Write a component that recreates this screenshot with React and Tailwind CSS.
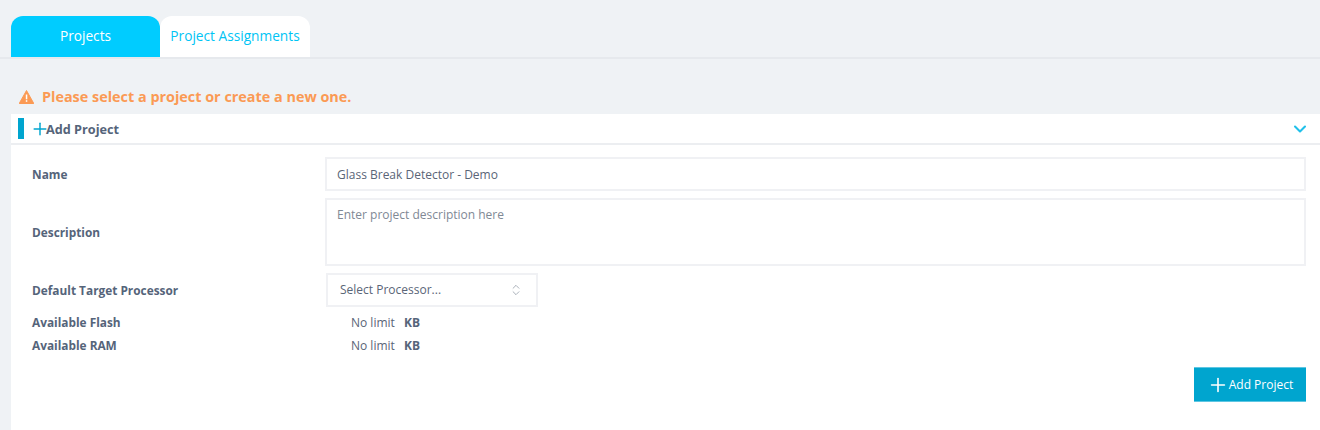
import React from "react";
import { ChevronDown, ChevronsUpDown, Plus } from "lucide-react";

const Warning = () => (
  <svg width="15" height="14" viewBox="0 0 15 14" className="shrink-0">
    <path d="M7.5 0.5 L14.8 13.5 H0.2 Z" fill="#fb9a54" stroke="#fb9a54" strokeLinejoin="round" />
    <rect x="6.8" y="4.5" width="1.5" height="4.8" fill="#fff" />
    <rect x="6.8" y="10.2" width="1.5" height="1.6" fill="#fff" />
  </svg>
);

const labelClass = "w-[293px] shrink-0 text-[11.85px] font-bold text-[#55647a]";

const App = () => {
  return (
    <div className="h-[430px] w-[1320px] overflow-hidden bg-[#eff2f5] font-['Open_Sans',sans-serif] text-xs text-[#5a6577]">
      <div className="flex items-end border-b-2 border-[#e6e9ed] pl-[11px] pt-4">
        <div className="flex h-[41px] w-[149px] items-center justify-center rounded-t-xl bg-[#00ccff] text-[13.7px] text-white">
          Projects
        </div>
        <div className="flex h-[41px] w-[150px] items-center justify-center rounded-t-xl bg-white text-[13.7px] text-[#00c4f5]">
          Project Assignments
        </div>
      </div>

      <div className="flex h-[55px] items-center gap-2 pl-[19px] pt-[21px] text-[14.4px] font-bold text-[#fb9a54]">
        <Warning />
        <span>Please select a project or create a new one.</span>
      </div>

      <div className="ml-[11px] h-[320px] bg-white">
        <div className="flex h-[31px] items-center border-b-2 border-[#eceef1] pl-[7px] pr-[10px]">
          <div className="h-[21px] w-[6px] bg-[#00a5cf]" />
          <Plus size={20} strokeWidth={1.75} className="-mr-1 ml-[6px] text-[#00a5cf]" />
          <span className="pt-px text-[12.7px] font-bold text-[#55647a]">Add Project</span>
          <ChevronDown size={20} strokeWidth={2.5} className="ml-auto text-[#20c0ea]" />
        </div>

        <div className="pl-[21px] pr-[14px] pt-[12px]">
          <div className="flex items-center">
            <div className={`${labelClass} pt-px`}>Name</div>
            <div className="flex h-[34px] flex-1 items-center border-2 border-[#f0f1f4] pl-[10px] pt-px text-[#5a6577]">
              Glass Break Detector - Demo
            </div>
          </div>

          <div className="mt-[7px] flex items-center">
            <div className={`${labelClass} pt-px`}>Description</div>
            <div className="h-[68px] flex-1 border-2 border-[#f0f1f4] pl-[10px] pt-[7px] text-[#808995]">
              Enter project description here
            </div>
          </div>

          <div className="mt-[7px] flex items-center">
            <div className={`${labelClass} pt-px`}>Default Target Processor</div>
            <div className="ml-px flex h-[34px] w-[212px] items-center justify-between border-2 border-[#f0f1f4] pl-[12px] pr-[13px]">
              <span>Select Processor...</span>
              <ChevronsUpDown size={14} strokeWidth={1.25} className="text-[#8a93a0]" />
            </div>
          </div>

          <div className="mt-[4px] flex h-[23px] items-center">
            <div className={labelClass}>Available Flash</div>
            <span className="ml-[26px] w-[53px]">No limit</span>
            <span className="font-bold text-[#55647a]">KB</span>
          </div>
          <div className="flex h-[23px] items-center">
            <div className={labelClass}>Available RAM</div>
            <span className="ml-[26px] w-[53px]">No limit</span>
            <span className="font-bold text-[#55647a]">KB</span>
          </div>

          <div className="mt-[10px] flex justify-end">
            <button className="flex h-[35px] w-[112px] items-center justify-center border-y border-[#5ec6e2] bg-[#00a5cf] text-xs text-white">
              <Plus size={22} strokeWidth={1.75} />
              Add Project
            </button>
          </div>
        </div>
      </div>
    </div>
  );
};

export default App;
